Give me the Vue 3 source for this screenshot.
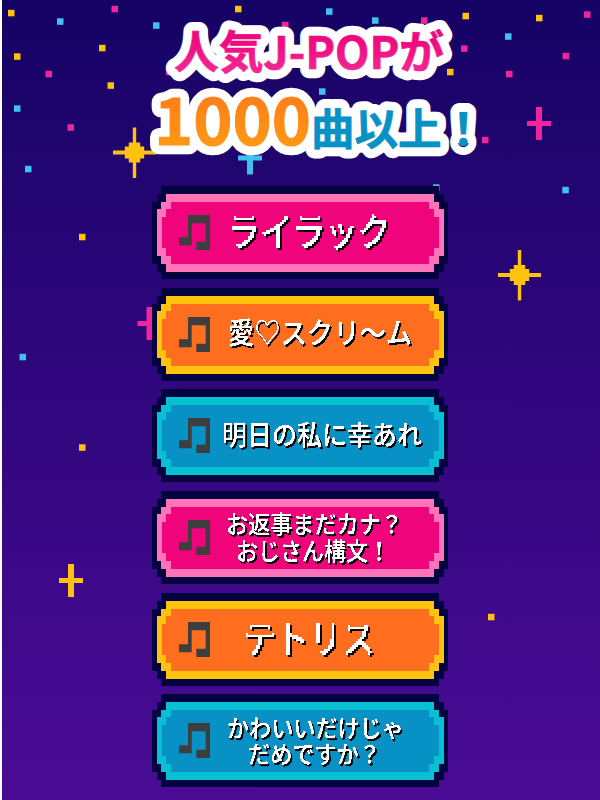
<template>
  <main class="poster">
    <svg class="poster__sky" viewBox="0 0 600 800" aria-hidden="true">
      <defs>
        <filter id="pixels" filterUnits="userSpaceOnUse" x="0" y="0" width="218" height="93" color-interpolation-filters="sRGB">
          <feFlood x="0" y="0" width="1" height="1" flood-color="#fff" result="point" />
          <feOffset in="point" dx="0" dy="0" x="0" y="0" width="2" height="2" />
          <feTile result="grid" />
          <feComposite in="SourceGraphic" in2="grid" operator="in" />
          <feComponentTransfer result="a">
            <feFuncA type="discrete" tableValues="0 0 1 1 1" />
          </feComponentTransfer>
          <feOffset in="a" dx="1" dy="0" result="b" />
          <feOffset in="a" dx="0" dy="1" result="c" />
          <feOffset in="a" dx="1" dy="1" result="d" />
          <feMerge result="letters">
            <feMergeNode in="a" />
            <feMergeNode in="b" />
            <feMergeNode in="c" />
            <feMergeNode in="d" />
          </feMerge>
          <feDropShadow in="letters" dx="2" dy="2" stdDeviation="0" flood-color="#08070c" />
        </filter>
        <filter id="jagged" filterUnits="userSpaceOnUse" x="0" y="0" width="218" height="93" color-interpolation-filters="sRGB">
          <feComponentTransfer result="letters">
            <feFuncA type="discrete" tableValues="0 0.15 1 1 1" />
          </feComponentTransfer>
          <feDropShadow in="letters" dx="1.5" dy="2" stdDeviation="0" flood-color="#08070c" />
        </filter>
      </defs>
      <rect v-for="(dot, i) in dots" :key="`dot-${i}`" :x="dot[0] - 3.5" :y="dot[1] - 3.2" width="6.5" height="6.5" :fill="colors[dot[2]]" />
      <path
        v-for="(plus, i) in pluses"
        :key="`plus-${i}`"
        d="M-3-16.5H3V-2.5H12V2.5H3V16.5H-3V2.5H-12V-2.5H-3Z"
        :transform="`translate(${plus[0]} ${plus[1]})`"
        :fill="colors[plus[2]]"
      />
      <path
        v-for="(star, i) in stars"
        :key="`star-${i}`"
        d="M-1.7-25H1.7V-10H5.7V-6H9.7V-2H21.5V2H9.7V6H5.7V10H1.7V25.5H-1.7V10H-5.7V6H-9.7V2H-21.5V-2H-9.7V-6H-5.7V-10H-1.7Z"
        :transform="`translate(${star[0]} ${star[1]})`"
        fill="#ffc20e"
      />
    </svg>

    <h1 class="headline">
      <svg class="headline__art" viewBox="0 0 600 180">
        <defs>
          <linearGradient id="pink" gradientUnits="userSpaceOnUse" x1="0" y1="30" x2="0" y2="75">
            <stop offset="0.2" stop-color="#ef087e" />
            <stop offset="1" stop-color="#f42a96" />
          </linearGradient>
          <linearGradient id="orange" gradientUnits="userSpaceOnUse" x1="0" y1="96" x2="0" y2="146">
            <stop offset="0" stop-color="#ff7e17" />
            <stop offset="1" stop-color="#ff9813" />
          </linearGradient>
        </defs>
        <g class="headline__outline" aria-hidden="true">
          <use href="#line-top" />
          <use href="#line-count" />
          <use href="#line-songs" />
        </g>
        <g fill="url(#pink)" stroke="url(#pink)" stroke-width="0.7">
          <text id="line-top" x="174" y="69" font-size="45" textLength="270" lengthAdjust="spacingAndGlyphs">人気J-POPが</text>
        </g>
        <g fill="url(#orange)" stroke="url(#orange)" stroke-width="1">
          <text id="line-count" x="154" y="145" font-size="65.5" textLength="157" lengthAdjust="spacingAndGlyphs">1000</text>
        </g>
        <g fill="#0891c5" stroke="#0891c5" stroke-width="0.7">
          <text id="line-songs" x="311" y="145" font-size="43.5" textLength="174" lengthAdjust="spacingAndGlyphs">曲以上！</text>
        </g>
      </svg>
    </h1>

    <ul class="songs">
      <li v-for="song in songs" :key="song.lines[0].text" class="song" :class="`song--${song.theme}`">
        <svg class="song__frame" viewBox="0 0 296 93" shape-rendering="crispEdges" aria-hidden="true">
          <path class="song__edge" d="M9 0H287V8H291.5V16H296V77.5H291.5V85.5H287V93H9V85.5H5V77.5H0V16H5V8H9Z" />
          <path class="song__border" d="M14 8H282V15.5H287V23H291.5V70H287V78H282V86H14V78H9V70H4.5V23H9V15.5H14Z" />
          <path class="song__fill" d="M19 15.5H277V23H282V31H286.5V62H282V70H277V78H19V70H14V62H9.5V31H14V23H19Z" />
        </svg>
        <svg class="song__note" viewBox="0 0 93 105" aria-hidden="true">
          <path d="M27 0H93V105H52V80H80V25H38V91H0V67H27Z" />
        </svg>
        <svg class="song__label" :class="{ 'song__label--large': song.large }" viewBox="0 0 218 93">
          <text :filter="song.large ? 'url(#pixels)' : 'url(#jagged)'">
            <tspan
              v-for="line in song.lines"
              :key="line.text"
              :x="line.x"
              :y="line.y"
              :font-size="line.size"
              :textLength="line.width"
              lengthAdjust="spacingAndGlyphs"
            >{{ line.text }}</tspan>
          </text>
        </svg>
      </li>
    </ul>
  </main>
</template>

<script setup>
const colors = {
  yellow: '#ffc20e',
  pink: '#f0249f',
  cyan: '#40c0ed',
};

const dots = [
  [11.5, 13, 'yellow'], [238.5, 9, 'yellow'], [17.5, 56.5, 'yellow'], [102.5, 48, 'yellow'], [111, 85.5, 'yellow'],
  [466, 16, 'yellow'], [539.5, 18, 'yellow'], [450.5, 72, 'yellow'], [82.5, 237, 'yellow'], [82.5, 447.5, 'yellow'], [491.5, 617, 'yellow'],
  [115, 9, 'pink'], [49, 74, 'pink'], [71, 127.5, 'pink'], [285.5, 25, 'pink'], [169.5, 72, 'pink'], [424.5, 20.5, 'pink'],
  [587.5, 14.5, 'pink'], [464.5, 48.5, 'pink'], [566, 56, 'pink'], [509.5, 74, 'pink'], [485.5, 140, 'pink'],
  [60.5, 21.5, 'cyan'], [156.5, 25.5, 'cyan'], [17.5, 108.5, 'cyan'], [28.5, 169, 'cyan'], [329.5, 11.5, 'cyan'],
  [375.5, 20.5, 'cyan'], [508.5, 36.5, 'cyan'], [322.5, 91.5, 'cyan'], [23, 357, 'cyan'], [565.8, 190, 'cyan'], [436.5, 187.5, 'cyan'],
];

const pluses = [
  [539, 123.5, 'pink'],
  [149.5, 323.5, 'pink'],
  [71, 580.5, 'yellow'],
  [250, 158, 'cyan'],
];

const stars = [
  [134.5, 152.5],
  [519.5, 275],
];

const songs = [
  { theme: 'pink', large: true, lines: [{ text: 'ライラック', x: 7, y: 59, size: 38, width: 163 }] },
  { theme: 'orange', lines: [{ text: '愛♡スクリ～ム', x: 8, y: 55.5, size: 29, width: 184 }] },
  { theme: 'blue', lines: [{ text: '明日の私に幸あれ', x: 2, y: 55.5, size: 27, width: 200 }] },
  {
    theme: 'pink',
    lines: [
      { text: 'お返事まだカナ？', x: 6, y: 42, size: 24, width: 177 },
      { text: 'おじさん構文！', x: 16, y: 68.5, size: 24, width: 154 },
    ],
  },
  { theme: 'orange', large: true, lines: [{ text: 'テトリス', x: 22.5, y: 59, size: 38, width: 132 }] },
  {
    theme: 'blue',
    lines: [
      { text: 'かわいいだけじゃ', x: 7, y: 43, size: 24, width: 177 },
      { text: 'だめですか？', x: 28, y: 69, size: 24, width: 133 },
    ],
  },
];
</script>

<style>
body {
  margin: 0;
  background-color: #fff;
}
</style>

<style scoped>
.poster {
  position: relative;
  box-sizing: border-box;
  width: 600px;
  height: 800px;
  overflow: hidden;
  border-left: 2px solid #fff;
  background: linear-gradient(#150365, #2c067a 40%, #4a0b95);
  font-family: 'Noto Sans CJK JP', sans-serif;
}

.poster__sky {
  position: absolute;
  top: 0;
  left: -2px;
  width: 600px;
  height: 800px;
}

.headline {
  position: relative;
  height: 180px;
  margin: 0 0 0 -2px;
}

.headline__art {
  display: block;
  width: 600px;
  height: 180px;
  font-weight: 700;
}

.headline__outline {
  fill: #fff;
  stroke: #fff;
  stroke-width: 18.5px;
  stroke-linejoin: round;
}

.songs {
  position: relative;
  display: flex;
  flex-direction: column;
  gap: 8.7px;
  width: 296px;
  margin: 6px 0 0 150px;
  padding: 0;
  list-style: none;
}

.song {
  position: relative;
  display: flex;
  align-items: center;
  height: 93px;
}

.song__frame {
  position: absolute;
  inset: 0;
  width: 296px;
  height: 93px;
}

.song__edge {
  fill: #02033f;
}

.song--pink .song__border {
  fill: #ff74b8;
}

.song--pink .song__fill {
  fill: #ef047b;
}

.song--orange .song__border {
  fill: #ffc20e;
}

.song--orange .song__fill {
  fill: #ff6e1f;
}

.song--blue .song__border {
  fill: #08bfd3;
}

.song--blue .song__fill {
  fill: #0891c5;
}

.song__note {
  position: relative;
  width: 31px;
  height: 35px;
  margin: 0 10px 0 27px;
  fill: #3c3e40;
}

.song__label {
  position: relative;
  width: 218px;
  height: 93px;
  fill: #fff;
  font-weight: 500;
}

.song__label--large {
  font-weight: 400;
  stroke: #fff;
  stroke-width: 0.6px;
}
</style>
